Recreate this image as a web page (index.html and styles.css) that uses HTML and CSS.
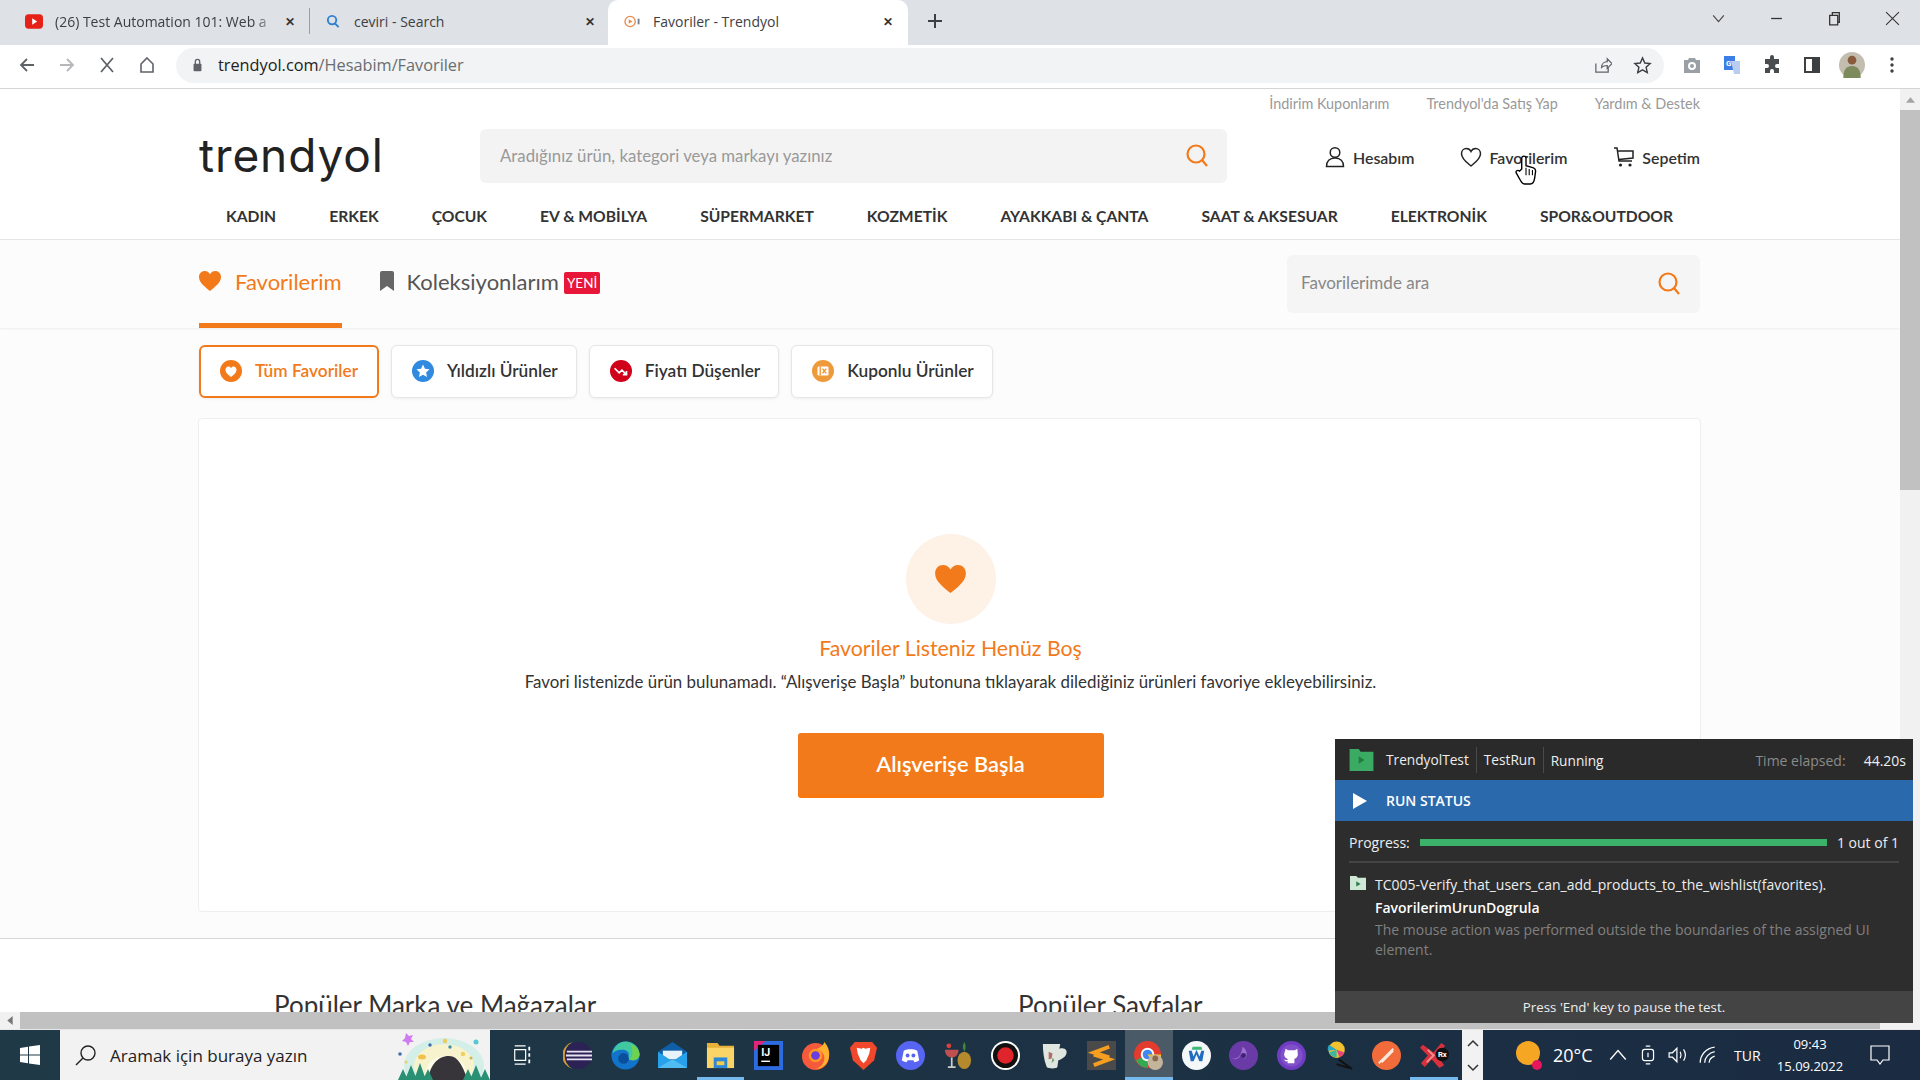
FILE: index.html
```html
<!DOCTYPE html>
<html lang="tr">
<head>
  <meta charset="UTF-8">
  <title>Favoriler - Trendyol</title>
  <link rel="stylesheet" href="styles.css">
</head>
<body>

  <!-- Browser tabs -->
  <div class="tabbar">
    <div class="tab tab-first">
      <svg class="favicon" viewBox="0 0 20 16"><rect width="20" height="16" rx="4" fill="#e62117"/><path d="M8 4.500v7l5.500-3.500z" fill="#fff"/></svg>
      <span class="tab-title tab-fade">(26) Test Automation 101: Web a</span>
      <span class="tab-close">&#10005;</span>
    </div>
    <div class="tab tab-second">
      <svg class="favicon" viewBox="0 0 16 16"><circle cx="7" cy="6.500" r="4.500" fill="none" stroke="#2f7fd1" stroke-width="2"/><path d="M10 10l4 4" stroke="#2f7fd1" stroke-width="2"/></svg>
      <span class="tab-title">ceviri - Search</span>
      <span class="tab-close">&#10005;</span>
    </div>
    <div class="tab tab-active">
      <svg class="favicon" viewBox="0 0 18 16"><circle cx="7" cy="8" r="5.500" fill="none" stroke="#e8884a" stroke-width="1.400"/><path d="M5.500 5.500v5l4-2.500z" fill="#e8884a"/><rect x="15" y="5" width="2" height="6" fill="#6f7f8f"/></svg>
      <span class="tab-title">Favoriler - Trendyol</span>
      <span class="tab-close">&#10005;</span>
    </div>
    <svg class="new-tab" viewBox="0 0 16 16"><path d="M8 1v14M1 8h14" stroke="#3c4043" stroke-width="2"/></svg>
    <div class="window-controls">
      <svg viewBox="0 0 14 14"><path d="M2 4l5 6 5-6" fill="none" stroke="#444" stroke-width="1"/></svg>
      <svg viewBox="0 0 14 14"><path d="M2 7h10" stroke="#333" stroke-width="1.200"/></svg>
      <svg viewBox="0 0 14 14"><path d="M2.500 4h7.500v9h-7.500zM5 4v-2.500h6.500v9h-1.500" fill="none" stroke="#333" stroke-width="1.200"/></svg>
      <svg viewBox="0 0 14 14"><path d="M1 1l12 12M13 1l-12 12" stroke="#333" stroke-width="1"/></svg>
    </div>
  </div>

  <!-- Address bar -->
  <div class="toolbar">
    <div class="nav-buttons">
      <svg viewBox="0 0 18 18"><path d="M16 9h-13M9 3l-6 6 6 6" fill="none" stroke="#5f6368" stroke-width="1.800"/></svg>
      <svg viewBox="0 0 18 18"><path d="M2 9h13M9 3l6 6-6 6" fill="none" stroke="#b5b7ba" stroke-width="1.800"/></svg>
      <svg viewBox="0 0 18 18"><path d="M3 2l12 14M15 2l-12 14" stroke="#5f6368" stroke-width="1.800"/></svg>
      <svg viewBox="0 0 18 18"><path d="M9 2l6 6v8h-12v-8z" fill="none" stroke="#5f6368" stroke-width="1.600"/></svg>
    </div>
    <div class="omnibox">
      <svg class="lock" viewBox="0 0 12 16"><path d="M3.500 7v-3a2.500 2.500 0 0 1 5 0v3" fill="none" stroke="#5f6368" stroke-width="1.500"/><rect x="1.500" y="6.500" width="9" height="8.500" rx="1" fill="#5f6368"/></svg>
      <span class="url"><b>trendyol.com</b>/Hesabim/Favoriler</span>
      <svg class="omni-icon" viewBox="0 0 20 20"><path d="M3 8v9h13v-5M9 12c0-4 3-6 6-6V3l5 5-5 5v-3c-3 0-5 1-6 2z" fill="none" stroke="#5f6368" stroke-width="1.300"/></svg>
      <svg class="omni-icon" viewBox="0 0 20 20"><path d="M10 2l2.400 5.400 5.600.6-4.200 3.800 1.200 5.700-5-2.900-5 2.900 1.200-5.700-4.200-3.800 5.600-.6z" fill="none" stroke="#3c4043" stroke-width="1.500"/></svg>
    </div>
    <div class="extensions">
      <svg viewBox="0 0 20 20"><path d="M2 5h4l1-2h6l1 2h4v13h-16z" fill="#9aa0a6"/><circle cx="10" cy="11" r="4" fill="#fff"/><circle cx="10" cy="11" r="2" fill="#9aa0a6"/></svg>
      <svg viewBox="0 0 20 20"><path d="M2 1h11v14h-11z" fill="#3d7de6"/><path d="M9 6h9v13h-6z" fill="#b8cdf0"/><text x="4" y="11" class="ext-g">G</text></svg>
      <svg viewBox="0 0 20 20"><path d="M8 2a2 2 0 0 1 4 0v2h5v5h-2a2 2 0 0 0 0 4h2v5h-5v-2a2 2 0 0 0-4 0v2h-5v-5h2a2 2 0 0 0 0-4h-2v-5h5z" fill="#4a4d50"/></svg>
      <svg viewBox="0 0 20 20"><path d="M3 3h14v14h-14z" fill="none" stroke="#3c4043" stroke-width="2"/><path d="M10 3h7v14h-7z" fill="#3c4043"/></svg>
      <svg class="avatar" viewBox="0 0 24 24"><circle cx="12" cy="12" r="12" fill="#c3bdb0"/><circle cx="12" cy="7.500" r="4" fill="#8a5a3c"/><path d="M4 24c0-8 3-11 8-11s8 3 8 11z" fill="#7d8a5c"/></svg>
      <svg viewBox="0 0 20 20"><circle cx="10" cy="4" r="1.700" fill="#3c4043"/><circle cx="10" cy="10" r="1.700" fill="#3c4043"/><circle cx="10" cy="16" r="1.700" fill="#3c4043"/></svg>
    </div>
  </div>

  <div class="viewport">
    <div class="page">

      <!-- Site header -->
      <div class="toplinks">
        <span>İndirim Kuponlarım</span>
        <span>Trendyol'da Satış Yap</span>
        <span>Yardım &amp; Destek</span>
      </div>
      <div class="site-header">
        <div class="logo">trendyol</div>
        <div class="search-box">
          <span>Aradığınız ürün, kategori veya markayı yazınız</span>
          <svg class="search-icon" viewBox="0 0 24 24"><circle cx="11" cy="11" r="8.500" fill="none" stroke="#f27a1a" stroke-width="2.200"/><path d="M17 17l5 6" stroke="#f27a1a" stroke-width="2.200"/></svg>
        </div>
        <div class="user-menu">
          <div class="user-item">
            <svg viewBox="0 0 22 22"><circle cx="11" cy="6.500" r="4.800" fill="none" stroke="#222" stroke-width="1.500"/><path d="M2.500 20.500c0-5 3-8.500 8.500-8.500s8.500 3.500 8.500 8.500z" fill="none" stroke="#222" stroke-width="1.500"/></svg>
            Hesabım
          </div>
          <div class="user-item">
            <svg viewBox="0 0 22 22"><path d="M11 20c-3-2.500-9.500-7-9.500-12.300 0-3 2.200-5.200 4.900-5.200 1.900 0 3.600 1 4.600 3 1-2 2.700-3 4.600-3 2.700 0 4.900 2.200 4.900 5.200 0 5.300-6.500 9.800-9.500 12.300z" fill="none" stroke="#222" stroke-width="1.500"/></svg>
            Favorilerim
          </div>
          <div class="user-item">
            <svg viewBox="0 0 22 22"><path d="M1 2h3l2 13h13M5 5h15v7l-14 1.500" fill="none" stroke="#222" stroke-width="1.500"/><circle cx="7.500" cy="19" r="1.600" fill="#222"/><circle cx="17" cy="19" r="1.600" fill="#222"/></svg>
            Sepetim
          </div>
        </div>
      </div>
      <nav class="main-nav">
        <a>KADIN</a><a>ERKEK</a><a>ÇOCUK</a><a>EV &amp; MOBİLYA</a><a>SÜPERMARKET</a><a>KOZMETİK</a><a>AYAKKABI &amp; ÇANTA</a><a>SAAT &amp; AKSESUAR</a><a>ELEKTRONİK</a><a>SPOR&amp;OUTDOOR</a>
      </nav>

      <!-- Favorites tabs -->
      <div class="fav-band">
        <div class="fav-tabs">
          <div class="fav-tab fav-tab-active">
            <svg viewBox="0 0 22 20"><path d="M11 20C7 16.500 0 12 0 6c0-3.500 2.600-6 5.700-6C8 0 10 1.200 11 3.300 12 1.200 14 0 16.300 0 19.400 0 22 2.500 22 6c0 6-7 10.500-11 14z" fill="#f27a1a"/></svg>
            Favorilerim
          </div>
          <div class="fav-tab">
            <svg class="bookmark" viewBox="0 0 16 20"><path d="M1 2a2 2 0 0 1 2-2h10a2 2 0 0 1 2 2v18l-7-5-7 5z" fill="#666"/></svg>
            Koleksiyonlarım
            <span class="badge">YENİ</span>
          </div>
        </div>
        <div class="fav-search">
          <span>Favorilerimde ara</span>
          <svg class="search-icon" viewBox="0 0 24 24"><circle cx="11" cy="11" r="8.500" fill="none" stroke="#f27a1a" stroke-width="2.200"/><path d="M17 17l5 6" stroke="#f27a1a" stroke-width="2.200"/></svg>
        </div>
      </div>

      <div class="content">
        <div class="filters">
          <div class="filter filter-active">
            <svg viewBox="0 0 24 24"><circle cx="12" cy="12" r="12" fill="#f27a1a"/><path d="M12 18.500c-2.500-2-6-4.500-6-8 0-2 1.500-3.500 3.200-3.500 1.200 0 2.200.6 2.800 1.800.6-1.200 1.600-1.800 2.800-1.800 1.700 0 3.200 1.500 3.200 3.500 0 3.500-3.500 6-6 8z" fill="#fff"/></svg>
            Tüm Favoriler
          </div>
          <div class="filter">
            <svg viewBox="0 0 24 24"><circle cx="12" cy="12" r="12" fill="#2f8ae0"/><path d="M12 5l2.100 4.600 5 .6-3.700 3.400 1 5-4.400-2.500-4.400 2.500 1-5-3.700-3.400 5-.6z" fill="#fff"/></svg>
            Yıldızlı Ürünler
          </div>
          <div class="filter">
            <svg viewBox="0 0 24 24"><circle cx="12" cy="12" r="12" fill="#d0021b"/><path d="M5 9l5 5 3-3 5 5M18 12v4h-4" fill="none" stroke="#fff" stroke-width="1.800"/></svg>
            Fiyatı Düşenler
          </div>
          <div class="filter">
            <svg viewBox="0 0 24 24"><circle cx="12" cy="12" r="12" fill="#ee9a3a"/><rect x="6" y="7" width="12" height="10" rx="1.500" fill="#fff"/><path d="M9 7v10" stroke="#ee9a3a" stroke-width="1.500"/><path d="M11.500 9.500l4 5M15.500 9.500l-4 5" stroke="#ee9a3a" stroke-width="1.500"/></svg>
            Kuponlu Ürünler
          </div>
        </div>

        <div class="empty-card">
          <div class="empty-circle">
            <svg viewBox="0 0 22 20"><path d="M11 20C7 16.500 0 12 0 6c0-3.500 2.600-6 5.700-6C8 0 10 1.200 11 3.300 12 1.200 14 0 16.300 0 19.400 0 22 2.500 22 6c0 6-7 10.500-11 14z" fill="#f27a1a"/></svg>
          </div>
          <div class="empty-title">Favoriler Listeniz Henüz Boş</div>
          <div class="empty-text">Favori listenizde ürün bulunamadı. “Alışverişe Başla” butonuna tıklayarak dilediğiniz ürünleri favoriye ekleyebilirsiniz.</div>
          <button class="start-button">Alışverişe Başla</button>
        </div>
      </div>

      <!-- Footer headings, cut off by the window -->
      <div class="footer-links">
        <div class="footer-brands">Popüler Marka ve Mağazalar</div>
        <div>Popüler Sayfalar</div>
      </div>
    </div>

    <div class="vscroll">
      <svg class="vscroll-arrow" viewBox="0 0 10 6"><path d="M5 0l5 6h-10z" fill="#a3a3a3"/></svg>
      <div class="vscroll-thumb"></div>
    </div>
  </div>

  <div class="hscroll">
    <svg class="hscroll-arrow" viewBox="0 0 6 10"><path d="M0 5l6-5v10z" fill="#777"/></svg>
    <div class="hscroll-thumb"></div>
  </div>

  <!-- Windows taskbar -->
  <div class="taskbar">
    <div class="start-btn">
      <svg viewBox="0 0 20 20"><path d="M0 3l8-1.200v7.700h-8zM9 1.600l11-1.600v9.500h-11zM0 10.500h8v7.700l-8-1.200zM9 10.500h11v9.500l-11-1.600z" fill="#fff"/></svg>
    </div>
    <div class="task-search">
      <svg viewBox="0 0 22 22"><circle cx="13" cy="9" r="7" fill="none" stroke="#222" stroke-width="1.400"/><path d="M8 14l-7 7" stroke="#222" stroke-width="1.400"/></svg>
      <span>Aramak için buraya yazın</span>
      <svg class="task-art" viewBox="0 0 92 50">
        <ellipse cx="46" cy="36" rx="40" ry="28" fill="#d4eee8"/>
        <ellipse cx="46" cy="36" rx="30" ry="22" fill="#f7f3cd"/>
        <ellipse cx="48" cy="42" rx="20" ry="16" fill="#fdfbe8"/>
        <path d="M30 50c2-14 9-24 21-24 10 0 14 12 19 24z" fill="#37343a"/>
        <path d="M0 50l5-11 5 11zM7 50l6-15 6 15zM16 50l6-17 6 17zM25 50l5-11 5 11zM65 50l5-11 5 11zM72 50l6-15 6 15zM82 50l5-11 5 11z" fill="#2a9074"/>
        <path d="M8 3l3 3 4-1-2 4 3 3-4 0-2 4-2-4-4-1 3-3z" fill="#cf7cf0"/>
        <circle cx="32" cy="15" r="1.700" fill="#3d6fb0"/><circle cx="47" cy="11" r="2.200" fill="#f0ca5a"/><circle cx="52" cy="17" r="1.700" fill="#3d90b0"/><circle cx="78" cy="12" r="2.500" fill="#55c8d0"/><circle cx="2" cy="24" r="1.800" fill="#3d6fb0"/><ellipse cx="24" cy="27" rx="4" ry="2.500" fill="#f3c04c"/><circle cx="65" cy="24" r="2.300" fill="#f0d060"/><circle cx="73" cy="28" r="1.500" fill="#d8b04c"/><circle cx="8" cy="32" r="1.500" fill="#e8d070"/>
      </svg>
    </div>
    <div class="task-view">
      <svg viewBox="0 0 22 24"><path d="M3 2h12M3 22h12M3 6h12v12h-12z" fill="none" stroke="#fff" stroke-width="1.300"/><path d="M19 3v4M19 10v4M19 17v4" stroke="#fff" stroke-width="2"/></svg>
    </div>
    <div class="task-apps">
      <!-- eclipse -->
      <div class="app"><svg viewBox="0 0 30 30"><circle cx="16" cy="15" r="14" fill="#2c2255"/><path d="M4 11h26M3 15h28M4 19h26" stroke="#e8e4f4" stroke-width="2"/><path d="M10 1a14.500 14.500 0 0 0 0 28 16 16 0 0 1 0-28z" fill="#d99a3a"/></svg></div>
      <!-- edge -->
      <div class="app"><svg viewBox="0 0 30 30"><circle cx="15" cy="15" r="14.500" fill="#1173c9"/><path d="M1 14C3 5 9 .5 15 .5c8 0 14.500 6 14.500 13 0 4-3 6.500-7 6.500-3 0-5-1-5-3 0-1 1-1.500 1-3 0-3-3-5-7-5-5 0-9 2-11 5z" fill="#40c8a0"/><path d="M20 3c6 2 9.500 6 9.500 11 0 4-3 6-7 6l-3-1c3-3 4-10 .5-16z" fill="#70d050"/><circle cx="13" cy="18" r="5.500" fill="#0b4f9a"/></svg></div>
      <!-- mail -->
      <div class="app"><svg viewBox="0 0 30 30"><path d="M15 1l15 10v16h-30v-16z" fill="#0f5fa8"/><path d="M5 10h20v9h-20z" fill="#e8f2fa"/><path d="M0 11l15 10 15-10v17h-30z" fill="#27a2ea"/><path d="M0 28l15-9 15 9z" fill="#4fbcf2"/></svg></div>
      <!-- files -->
      <div class="app app-open"><svg viewBox="0 0 30 30"><path d="M1 2h11l2 3h15v23h-28z" fill="#e8b23a"/><path d="M1 7h28v21h-28z" fill="#fbd467"/><rect x="8" y="17" width="14" height="11" fill="#2b88d8"/><rect x="11" y="21" width="8" height="4" fill="#f7c948"/></svg></div>
      <!-- intellij -->
      <div class="app"><svg viewBox="0 0 30 30"><path d="M0 0h30v30h-30z" fill="#2c6ce0"/><path d="M0 0h12l-12 10z" fill="#e0257a"/><path d="M4 4h22v22h-22z" fill="#000"/><text x="7.500" y="15.500" class="app-ij">IJ</text><path d="M7.500 21h9" stroke="#fff" stroke-width="1.500"/></svg></div>
      <!-- firefox -->
      <div class="app"><svg viewBox="0 0 30 30"><circle cx="15" cy="16" r="14" fill="#f55a3c"/><path d="M24 1c6 6 6 14 4 19-2 6-8 9-13 9 6-2 10-7 9-13-1-5-5-7-9-7 3-2 8-3 9-8z" fill="#ffb02e"/><circle cx="15" cy="15" r="7" fill="#ff9820"/><circle cx="15" cy="15" r="4.500" fill="#6a3ee0"/></svg></div>
      <!-- brave -->
      <div class="app"><svg viewBox="0 0 30 30"><path d="M6 1h18l5 6-3 13-11 10-11-10-3-13z" fill="#f1472a"/><path d="M8 7l5 1 2-1 2 1 5-1-1 6-3 7-3 3-3-3-3-7z" fill="#fff"/></svg></div>
      <!-- discord -->
      <div class="app"><svg viewBox="0 0 30 30"><circle cx="15" cy="15" r="15" fill="#5865f2"/><path d="M8 10c4-2 10-2 14 0l2 10c-2 1.500-4 2-5 2l-1-2h-6l-1 2c-1 0-3-.5-5-2z" fill="#fff"/><circle cx="12" cy="15" r="2" fill="#5865f2"/><circle cx="18" cy="15" r="2" fill="#5865f2"/></svg></div>
      <!-- tropical -->
      <div class="app"><svg viewBox="0 0 30 30"><ellipse cx="21" cy="20" rx="7" ry="9" fill="#b58a2c"/><path d="M21 11c-1-4-4-6-6-6 2 0 3 1 5 3-1-3 0-5 1-7 1 2 2 4 1 7 2-2 3-3 5-3-2 0-5 2-6 6z" fill="#3f8a3f"/><path d="M1 9h14c0 5-3 8-7 8s-7-3-7-8z" fill="#c05050"/><path d="M8 17v9M4 27h8" stroke="#ccc" stroke-width="1.800"/><circle cx="5" cy="5" r="2.500" fill="#d94040"/></svg></div>
      <!-- recorder -->
      <div class="app"><svg viewBox="0 0 30 30"><circle cx="15" cy="15" r="15" fill="#fff"/><circle cx="15" cy="15" r="13" fill="#111"/><circle cx="15" cy="15" r="8.500" fill="#e0242c"/></svg></div>
      <!-- jug -->
      <div class="app"><svg viewBox="0 0 30 30"><path d="M4 3h18l-1 5c6-2 9 2 7 6-1 3-5 5-8 6l-1 7c-1 2-9 2-11 0-3-8-4-16-4-24z" fill="#dfe5df"/><path d="M10 11l4 2-1 5-3 1z" fill="#b86a6a"/><path d="M14 17l2 3-3 3z" fill="#7aa070"/></svg></div>
      <!-- sublime -->
      <div class="app"><svg viewBox="0 0 30 30"><rect width="30" height="30" fill="#4a4a4a"/><path d="M23 6l-16 6 16 5M7 14l16 5-16 6" fill="none" stroke="#f59e1f" stroke-width="4"/></svg></div>
      <!-- chrome profile -->
      <div class="app app-active app-open"><svg viewBox="0 0 30 30"><circle cx="14" cy="14" r="14" fill="#e33b2e"/><path d="M14 14L2 20a14 14 0 0 0 12 8z" fill="#34a853"/><circle cx="14" cy="14" r="7" fill="#fff"/><circle cx="14" cy="14" r="5" fill="#4285f4"/><path d="M14 14h14a14 14 0 0 1-6 12z" fill="#f5c518"/><circle cx="22" cy="22" r="8" fill="#c4b49c"/><circle cx="22" cy="18" r="3" fill="#8a6a4c"/></svg></div>
      <!-- word-like -->
      <div class="app"><svg viewBox="0 0 30 30"><circle cx="15" cy="15" r="15" fill="#f4f8f8"/><path d="M7 10l2 11h3l3-7 3 7h3l2-11h-3l-2 6-3-7-3 7-2-6z" fill="#1f6cc0"/><path d="M11 6h9l1 3h-11z" fill="#3cb878"/></svg></div>
      <!-- purple app -->
      <div class="app"><svg viewBox="0 0 30 30"><circle cx="15" cy="15" r="15" fill="#6a3ba6"/><path d="M3 18c7 1 10-4 11-12 5 3 6 10 1 14 3-3 0-7-3-6-1 4-4 6-9 4z" fill="#9a70d0"/><circle cx="15" cy="15" r="2.500" fill="#3f2270"/></svg></div>
      <!-- github -->
      <div class="app"><svg viewBox="0 0 30 30"><circle cx="15" cy="15" r="15" fill="#6f3cc3"/><circle cx="15" cy="15" r="11.500" fill="#8050c8"/><path d="M9 8l2.500 1.500h7l2.500-1.500.5 5c.5 3-1.500 5-3.500 5.500v4.500h-7v-2c-2 .5-3-.5-4-2 1 .5 2 1 4 .5v-1c-2-.5-4-2.500-3.500-5.500z" fill="#fff"/></svg></div>
      <!-- color picker -->
      <div class="app"><svg viewBox="0 0 30 30"><circle cx="12" cy="9" r="8.500" fill="#f2c12e"/><path d="M12 9L4 4a9 9 0 0 0-1 6z" fill="#2aa7c4"/><path d="M12 9l8 3a9 9 0 0 1-5 5z" fill="#e8437e"/><path d="M12 9l-8 3a9 9 0 0 0 8 5z" fill="#3cb8a0"/><path d="M14 19l14 10M12 24l13 4" stroke="#111" stroke-width="2"/></svg></div>
      <!-- postman -->
      <div class="app"><svg viewBox="0 0 30 30"><circle cx="15" cy="15" r="15" fill="#f26b3a"/><path d="M7 23l15-15M10 22l12-12" stroke="#fde8dc" stroke-width="2"/></svg></div>
      <!-- ranorex -->
      <div class="app app-open"><svg viewBox="0 0 30 30"><path d="M3 4l11 8 8-10 4 3-8 10 7 10-5 3-8-9-7 8-4-4 7-8-8-8z" fill="#d8303c"/><path d="M8 9l6 6M7 22l8-8" stroke="#f08a8a" stroke-width="2"/><circle cx="23" cy="14" r="7" fill="#111"/><text x="18.500" y="17" class="app-rx">Rx</text></svg></div>
    </div>
    <div class="task-spin">
      <svg viewBox="0 0 12 8"><path d="M1 7l5-5 5 5" fill="none" stroke="#333" stroke-width="1.500"/></svg>
      <svg viewBox="0 0 12 8"><path d="M1 1l5 5 5-5" fill="none" stroke="#333" stroke-width="1.500"/></svg>
    </div>
    <div class="tray">
      <svg class="tray-weather" viewBox="0 0 30 32"><circle cx="15" cy="14" r="12" fill="#f5a623"/><circle cx="24" cy="26" r="5" fill="#e8175d"/></svg>
      <span class="tray-temp">20°C</span>
      <svg class="tray-icon" viewBox="0 0 18 18"><path d="M2 13l7-8 7 8" fill="none" stroke="#fff" stroke-width="1.200"/></svg>
      <svg class="tray-icon" viewBox="0 0 18 18"><rect x="4" y="4" width="10" height="10" rx="2" fill="none" stroke="#fff" stroke-width="1.100"/><path d="M7 1h4M7 17h4M9 7v4" stroke="#fff" stroke-width="1.100"/></svg>
      <svg class="tray-icon" viewBox="0 0 18 18"><path d="M1 7h3l4-4v12l-4-4h-3zM11 6c1 2 1 4 0 6M14 4c2 3 2 7 0 10" fill="none" stroke="#fff" stroke-width="1.100"/></svg>
      <svg class="tray-icon" viewBox="0 0 18 18"><path d="M2 16c0-7 5-13 13-14M6 16c0-5 4-9 9-10M10 16c0-3 2-5 5-6" fill="none" stroke="#fff" stroke-width="1.100"/></svg>
      <span class="tray-lang">TUR</span>
      <div class="tray-clock"><span>09:43</span><span>15.09.2022</span></div>
      <svg class="tray-note" viewBox="0 0 20 20"><path d="M1 1h18v14h-6l-3 4-3-4h-6z" fill="none" stroke="#fff" stroke-width="1.200"/></svg>
    </div>
  </div>

  <!-- Test runner window floating over the page -->
  <div class="runner">
    <div class="runner-head">
      <svg class="runner-folder" viewBox="0 0 26 24"><path d="M0 0h10l2 3h14v21h-26z" fill="#3bab63"/><path d="M10 8v8l6-4z" fill="#217a42"/></svg>
      <span class="runner-cell">TrendyolTest</span>
      <span class="runner-cell">TestRun</span>
      <span class="runner-state">Running</span>
      <span class="runner-elapsed">Time elapsed:</span>
      <span class="runner-time">44.20s</span>
    </div>
    <div class="runner-status">
      <svg viewBox="0 0 14 16"><path d="M0 0l14 8-14 8z" fill="#fff"/></svg>
      RUN STATUS
    </div>
    <div class="runner-body">
      <div class="runner-progress">
        <span>Progress:</span>
        <div class="progress-bar"></div>
        <span>1 out of 1</span>
      </div>
      <div class="runner-test">
        <svg viewBox="0 0 18 18"><path d="M0 1h7l2 2h9v14h-18z" fill="#cfe8d6"/><path d="M7 7v6l5-3z" fill="#2e7d4f"/></svg>
        <div>
          <div class="test-name">TC005-Verify_that_users_can_add_products_to_the_wishlist(favorites).</div>
          <div class="test-step">FavorilerimUrunDogrula</div>
          <div class="test-msg">The mouse action was performed outside the boundaries of the assigned UI element.</div>
        </div>
      </div>
    </div>
    <div class="runner-foot">Press 'End' key to pause the test.</div>
  </div>

  <!-- Mouse pointer -->
  <svg class="pointer" viewBox="0 0 20 28"><path d="M6 13V3a2 2 0 0 1 4 0v7l7 2c1.500.5 2 1.500 2 3l-1 7c-.5 3-2 5-4 5H9c-2 0-3-1-4-3l-4-7c-1-2 1-3.500 3-2z" fill="#fff" stroke="#000" stroke-width="1.300"/><path d="M10 12v7M13 13v6M16 14v5" stroke="#000" stroke-width="1"/></svg>

</body>
</html>
```

FILE: styles.css
```css
* {
  margin: 0;
  padding: 0;
  box-sizing: border-box;
}

html, body {
  height: 100%;
  overflow: hidden;
}

body {
  display: flex;
  flex-direction: column;
  font-family: "Lato", "Open Sans", sans-serif;
  background-color: #fff;
  color: #333;
}

/* Browser tabs */
.tabbar {
  display: flex;
  align-items: flex-end;
  height: 45px;
  background-color: #dee1e6;
  font-family: "Open Sans", sans-serif;
  font-size: 14px;
  color: #3c4043;
  flex-shrink: 0;
}

.tab {
  display: flex;
  align-items: center;
  height: 45px;
  padding-bottom: 3px;
}

.tab-first {
  width: 310px;
  padding: 0 14px 0 25px;
  border-right: 1px solid #9a9da1;
  height: 26px;
  margin-bottom: 11px;
}

.tab-second {
  width: 298px;
  padding: 0 13px 3px 14px;
}

.tab-active {
  width: 300px;
  padding: 0 15px 3px 15px;
  background-color: #fff;
  border-radius: 10px 10px 0 0;
}

.favicon {
  width: 18px;
  height: 15px;
  margin-right: 12px;
  flex-shrink: 0;
}

.tab-title {
  flex: 1;
  white-space: nowrap;
  overflow: hidden;
}

.tab-fade {
  -webkit-mask-image: linear-gradient(90deg, #000 90%, transparent);
  mask-image: linear-gradient(90deg, #000 90%, transparent);
}

.tab-close {
  font-size: 12px;
  font-weight: 700;
  color: #333;
  margin-left: 8px;
}

.new-tab {
  width: 16px;
  height: 16px;
  margin: 0 0 16px 19px;
}

.window-controls {
  display: flex;
  gap: 43px;
  margin-left: auto;
  padding: 11px 20px 0 0;
  align-self: flex-start;
}

.window-controls svg {
  width: 15px;
  height: 15px;
}

/* Address bar */
.toolbar {
  display: flex;
  align-items: center;
  height: 44px;
  padding-bottom: 3px;
  border-bottom: 1px solid #d5d5d5;
  flex-shrink: 0;
  background-color: #fff;
}

.nav-buttons {
  display: flex;
  gap: 22px;
  padding-left: 18px;
  width: 176px;
}

.nav-buttons svg {
  width: 18px;
  height: 18px;
}

.omnibox {
  display: flex;
  align-items: center;
  width: 1488px;
  height: 35px;
  padding: 0 12px 0 16px;
  background-color: #f1f3f4;
  border-radius: 18px;
  gap: 21px;
}

.lock {
  width: 11px;
  height: 14px;
  margin-right: -6px;
}

.url {
  flex: 1;
  font-family: "Open Sans", sans-serif;
  font-size: 16.300px;
  color: #6a6d70;
}

.url b {
  font-weight: 400;
  color: #222;
}

.omni-icon {
  width: 19px;
  height: 19px;
}

.extensions {
  display: flex;
  align-items: center;
  gap: 20px;
  padding-left: 18px;
}

.extensions svg {
  width: 20px;
  height: 20px;
}

.extensions .avatar {
  width: 26px;
  height: 26px;
  margin: 0 -3px;
}

.ext-g {
  font-family: "Roboto", sans-serif;
  font-size: 8px;
  font-weight: 700;
  fill: #fff;
}

/* Page area */
.viewport {
  flex: 1;
  display: flex;
  min-height: 0;
}

.page {
  flex: 1;
  overflow: hidden;
  background-color: #fff;
}

.toplinks {
  display: flex;
  justify-content: flex-end;
  gap: 37px;
  height: 40px;
  padding-right: 200px;
  font-size: 14.400px;
  line-height: 30px;
  color: #999;
}

.site-header {
  display: flex;
  align-items: center;
  height: 54px;
  padding: 0 200px 0 199px;
}

.logo {
  width: 281px;
  padding-bottom: 2px;
  font-family: "Inter", sans-serif;
  font-size: 46px;
  font-weight: 400;
  letter-spacing: 0.900px;
  color: #222;
}

.search-box {
  display: flex;
  align-items: center;
  justify-content: space-between;
  width: 747px;
  height: 54px;
  padding: 0 18px 2px 20px;
  background-color: #f3f3f3;
  border-radius: 6px;
  font-size: 16.800px;
  color: #999;
}

.search-icon {
  width: 24px;
  height: 24px;
}

.user-menu {
  display: flex;
  margin-left: auto;
  padding-top: 2px;
  gap: 46px;
}

.user-item {
  display: flex;
  align-items: center;
  gap: 7px;
  font-size: 15.900px;
  font-weight: 600;
  color: #333;
}

.user-item svg {
  width: 22px;
  height: 22px;
}

.main-nav {
  display: flex;
  gap: 53px;
  height: 57px;
  padding: 20px 0 0 226px;
  border-bottom: 1px solid #e6e6e6;
  font-size: 15.650px;
  font-weight: 700;
  line-height: 26px;
  color: #333;
}

/* Favorites tabs */
.fav-band {
  display: flex;
  justify-content: space-between;
  height: 88px;
  padding: 0 200px 0 199px;
  background-color: #fcfcfc;
  box-shadow: 0 1px 2px rgba(0, 0, 0, 0.06);
  position: relative;
}

.fav-tabs {
  display: flex;
  gap: 37px;
}

.fav-tab {
  display: flex;
  align-items: center;
  gap: 14px;
  height: 88px;
  padding-bottom: 6px;
  font-size: 22px;
  color: #555;
}

.fav-tab svg {
  width: 22px;
  height: 20px;
}

.fav-tab .bookmark {
  width: 16px;
  margin-right: -2px;
}

.fav-tab-active {
  color: #f27a1a;
  border-bottom: 5px solid #f27a1a;
  padding-bottom: 1px;
}

.badge {
  margin: 4px 0 0 -9px;
  padding: 0 3px;
  background-color: #e8173a;
  border-radius: 2px;
  font-size: 13.500px;
  line-height: 22px;
  color: #fff;
}

.fav-search {
  display: flex;
  align-items: center;
  justify-content: space-between;
  width: 413px;
  height: 58px;
  margin-top: 15px;
  padding: 0 19px 3px 14px;
  background-color: #f5f5f5;
  border-radius: 6px;
  font-size: 17px;
  color: #888;
}

.content {
  height: 611px;
  padding: 17px 199px 0 198px;
  background-color: #fcfcfc;
  border-bottom: 1px solid #d8d8d8;
}

.filters {
  display: flex;
  gap: 12px;
  margin: 0 0 20px 1px;
}

.filter {
  display: flex;
  align-items: center;
  gap: 13px;
  height: 53px;
  padding: 0 18px 2px 20px;
  background-color: #fff;
  border: 1px solid #e6e6e6;
  border-radius: 6px;
  box-shadow: 0 1px 3px rgba(0, 0, 0, 0.06);
  font-size: 17.300px;
  font-weight: 600;
  color: #333;
}

.filter svg {
  width: 22px;
  height: 22px;
}

.filter-active {
  border: 2px solid #f27a1a;
  padding: 0 19px 2px 19px;
  color: #f27a1a;
}

.empty-card {
  display: flex;
  flex-direction: column;
  align-items: center;
  height: 494px;
  padding: 115px 0 0 2px;
  background-color: #fff;
  border: 1px solid #eee;
  border-radius: 4px;
}

.empty-circle {
  display: flex;
  align-items: center;
  justify-content: center;
  width: 90px;
  height: 90px;
  background-color: #fef1e6;
  border-radius: 50%;
}

.empty-circle svg {
  width: 31px;
  height: 28px;
}

.empty-title {
  margin-top: 10px;
  font-size: 21.300px;
  line-height: 28px;
  color: #f27a1a;
}

.empty-text {
  margin-top: 9px;
  font-size: 16.900px;
  line-height: 22px;
  color: #333;
}

.start-button {
  width: 306px;
  height: 65px;
  margin-top: 40px;
  padding-bottom: 2px;
  background-color: #f27a1a;
  border: none;
  border-bottom: 3px solid #f8780e;
  border-radius: 3px;
  font-family: inherit;
  font-size: 21.800px;
  font-weight: 600;
  color: #fff;
}

.footer-links {
  display: flex;
  padding: 51px 0 0 274px;
  font-size: 26px;
  line-height: 30px;
  color: #333;
}

.footer-brands {
  width: 744px;
}

/* Scrollbars */
.vscroll {
  width: 20px;
  background-color: #f1f1f1;
  flex-shrink: 0;
}

.vscroll-arrow {
  display: block;
  width: 9px;
  height: 6px;
  margin: 8px auto 7px;
}

.vscroll-thumb {
  height: 380px;
  background-color: #c1c1c1;
}

.hscroll {
  display: flex;
  align-items: center;
  height: 17px;
  background-color: #f1f1f1;
  flex-shrink: 0;
}

.hscroll-arrow {
  width: 6px;
  height: 9px;
  margin: 0 7px;
}

.hscroll-thumb {
  width: 1860px;
  height: 17px;
  background-color: #c1c1c1;
}

/* Taskbar */
.taskbar {
  display: flex;
  align-items: stretch;
  height: 51px;
  background: linear-gradient(90deg, #1f3a46, #1a2b42);
  border-top: 1px solid #e8e8e8;
  color: #fff;
  flex-shrink: 0;
  font-family: "Open Sans", sans-serif;
}

.start-btn {
  display: flex;
  align-items: center;
  justify-content: center;
  width: 60px;
}

.start-btn svg {
  width: 20px;
  height: 20px;
}

.task-search {
  display: flex;
  align-items: center;
  position: relative;
  width: 430px;
  padding-left: 15px;
  background-color: #f2f2f2;
  font-size: 17px;
  color: #222;
  overflow: hidden;
}

.task-search svg {
  width: 22px;
  height: 22px;
  margin-right: 13px;
}

.task-search .task-art {
  position: absolute;
  right: 0;
  bottom: 0;
  width: 92px;
  height: 50px;
  margin: 0;
}

.task-view {
  display: flex;
  align-items: center;
  justify-content: center;
  width: 64px;
}

.task-view svg {
  width: 20px;
  height: 24px;
}

.task-apps {
  display: flex;
  width: 904px;
}

.app {
  display: flex;
  align-items: center;
  justify-content: center;
  width: 47.670px;
  border-bottom: 3px solid transparent;
  padding-top: 3px;
}

.app svg {
  width: 29px;
  height: 29px;
}

.app-open {
  border-bottom-color: #76b9ed;
}

.app-active {
  background-color: #4a5a66;
}

.app-ij, .app-rx {
  font-family: "Roboto", sans-serif;
  font-weight: 700;
  fill: #fff;
}

.app-ij {
  font-size: 11px;
}

.app-rx {
  font-size: 8px;
}

.task-spin {
  display: flex;
  flex-direction: column;
  justify-content: space-around;
  align-items: center;
  width: 21px;
  margin-left: 4px;
  background-color: #f2f2f2;
}

.task-spin svg {
  width: 12px;
  height: 8px;
}

.tray {
  flex: 1;
  display: flex;
  align-items: center;
  padding-left: 30px;
  font-size: 16px;
}

.tray-weather {
  width: 30px;
  height: 32px;
  margin-right: 10px;
}

.tray-temp {
  width: 55px;
  font-size: 18px;
}

.tray-icon {
  width: 20px;
  height: 20px;
  margin-right: 10px;
}

.tray-lang {
  width: 38px;
  margin-left: 6px;
  font-size: 14px;
}

.tray-clock {
  display: flex;
  flex-direction: column;
  align-items: center;
  gap: 6px;
  width: 76px;
  font-size: 13px;
  line-height: 16px;
}

.tray-note {
  width: 20px;
  height: 22px;
  margin-left: 22px;
}

/* Test runner */
.runner {
  position: absolute;
  left: 1335px;
  top: 739px;
  width: 578px;
  height: 284px;
  display: flex;
  flex-direction: column;
  background-color: #2d2d2d;
  font-family: "Open Sans", sans-serif;
  font-size: 14px;
  color: #eee;
}

.runner-head {
  display: flex;
  align-items: center;
  height: 41px;
  padding: 1px 7px 0 14px;
  background-color: #2a2a2a;
}

.runner-folder {
  width: 25px;
  height: 22px;
  margin-right: 12px;
}

.runner-cell {
  padding-right: 7px;
  margin-right: 7px;
  border-right: 1px solid #4a4a4a;
  font-size: 13.700px;
  line-height: 26px;
}

.runner-state {
  font-size: 13.700px;
}

.runner-elapsed {
  margin-left: auto;
  color: #8a8a8a;
}

.runner-time {
  margin-left: 18px;
}

.runner-status {
  display: flex;
  align-items: center;
  gap: 19px;
  height: 41px;
  padding-left: 18px;
  background-color: #2a69ac;
  font-weight: 600;
  color: #fff;
}

.runner-status svg {
  width: 14px;
  height: 16px;
}

.runner-body {
  flex: 1;
  padding: 0 14px;
}

.runner-progress {
  display: flex;
  align-items: center;
  gap: 10px;
  height: 42px;
  padding-top: 2px;
  border-bottom: 2px solid #444;
}

.progress-bar {
  flex: 1;
  height: 7px;
  background-color: #3cb16a;
}

.runner-test {
  display: flex;
  gap: 8px;
  padding-top: 10px;
}

.runner-test svg {
  width: 18px;
  height: 16px;
  flex-shrink: 0;
  margin-top: 2px;
}

.test-name, .test-step {
  line-height: 23px;
}

.test-step {
  font-weight: 600;
  color: #fff;
}

.test-msg {
  margin-top: 1px;
  line-height: 20px;
  color: #808080;
}

.runner-foot {
  height: 32px;
  background-color: #444;
  font-size: 13.300px;
  line-height: 32px;
  text-align: center;
  color: #eee;
}

.pointer {
  position: absolute;
  left: 1515px;
  top: 155px;
  width: 22px;
  height: 30px;
}
```
